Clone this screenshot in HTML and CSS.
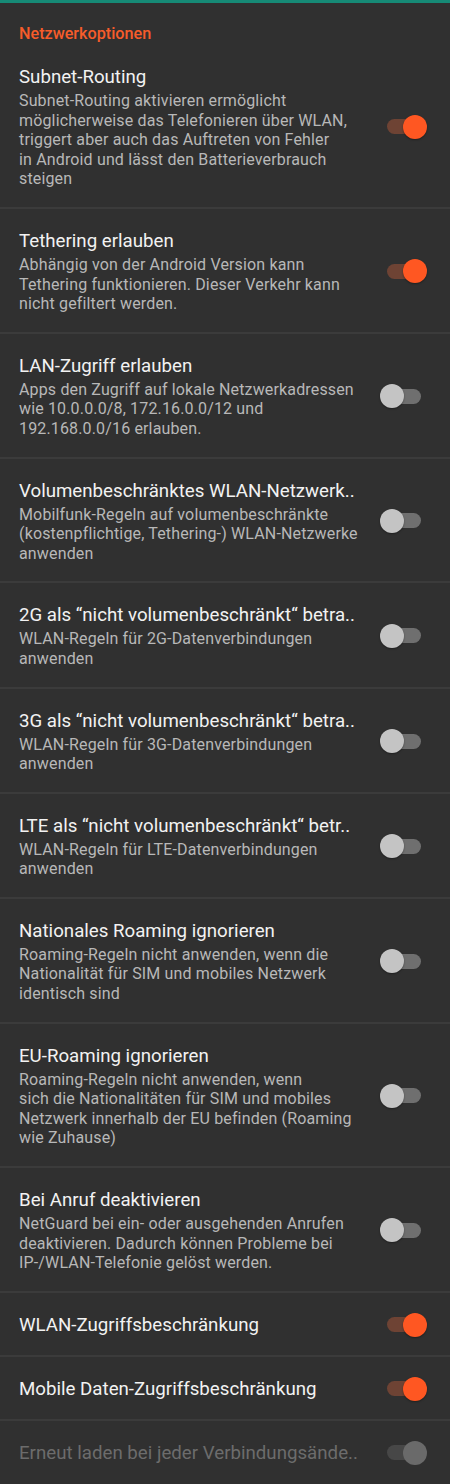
FILE: index.html
```html
<!DOCTYPE html>
<html lang="de">
<head>
<meta charset="utf-8">
<title>Netzwerkoptionen</title>
<link rel="stylesheet" href="styles.css">
</head>
<body>
<div class="topbar"></div>
<div class="category">Netzwerkoptionen</div>

<div class="pref">
  <div class="text">
    <div class="title">Subnet-Routing</div>
    <div class="summary">Subnet-Routing aktivieren ermöglicht<br>möglicherweise das Telefonieren über WLAN,<br>triggert aber auch das Auftreten von Fehler<br>in Android und lässt den Batterieverbrauch<br>steigen</div>
  </div>
  <div class="switch on"><span class="track"></span><span class="thumb"></span></div>
</div>

<div class="pref">
  <div class="text">
    <div class="title">Tethering erlauben</div>
    <div class="summary">Abhängig von der Android Version kann<br>Tethering funktionieren. Dieser Verkehr kann<br>nicht gefiltert werden.</div>
  </div>
  <div class="switch on"><span class="track"></span><span class="thumb"></span></div>
</div>

<div class="pref">
  <div class="text">
    <div class="title">LAN-Zugriff erlauben</div>
    <div class="summary">Apps den Zugriff auf lokale Netzwerkadressen<br>wie 10.0.0.0/8, 172.16.0.0/12 und<br>192.168.0.0/16 erlauben.</div>
  </div>
  <div class="switch"><span class="track"></span><span class="thumb"></span></div>
</div>

<div class="pref">
  <div class="text">
    <div class="title">Volumenbeschränktes WLAN-Netzwerk..</div>
    <div class="summary">Mobilfunk-Regeln auf volumenbeschränkte<br>(kostenpflichtige, Tethering-) WLAN-Netzwerke<br>anwenden</div>
  </div>
  <div class="switch"><span class="track"></span><span class="thumb"></span></div>
</div>

<div class="pref">
  <div class="text">
    <div class="title">2G als “nicht volumenbeschränkt“ betra..</div>
    <div class="summary">WLAN-Regeln für 2G-Datenverbindungen<br>anwenden</div>
  </div>
  <div class="switch"><span class="track"></span><span class="thumb"></span></div>
</div>

<div class="pref">
  <div class="text">
    <div class="title">3G als “nicht volumenbeschränkt“ betra..</div>
    <div class="summary">WLAN-Regeln für 3G-Datenverbindungen<br>anwenden</div>
  </div>
  <div class="switch"><span class="track"></span><span class="thumb"></span></div>
</div>

<div class="pref">
  <div class="text">
    <div class="title">LTE als “nicht volumenbeschränkt“ betr..</div>
    <div class="summary">WLAN-Regeln für LTE-Datenverbindungen<br>anwenden</div>
  </div>
  <div class="switch"><span class="track"></span><span class="thumb"></span></div>
</div>

<div class="pref">
  <div class="text">
    <div class="title">Nationales Roaming ignorieren</div>
    <div class="summary">Roaming-Regeln nicht anwenden, wenn die<br>Nationalität für SIM und mobiles Netzwerk<br>identisch sind</div>
  </div>
  <div class="switch"><span class="track"></span><span class="thumb"></span></div>
</div>

<div class="pref">
  <div class="text">
    <div class="title">EU-Roaming ignorieren</div>
    <div class="summary">Roaming-Regeln nicht anwenden, wenn<br>sich die Nationalitäten für SIM und mobiles<br>Netzwerk innerhalb der EU befinden (Roaming<br>wie Zuhause)</div>
  </div>
  <div class="switch"><span class="track"></span><span class="thumb"></span></div>
</div>

<div class="pref">
  <div class="text">
    <div class="title">Bei Anruf deaktivieren</div>
    <div class="summary">NetGuard bei ein- oder ausgehenden Anrufen<br>deaktivieren. Dadurch können Probleme bei<br>IP-/WLAN-Telefonie gelöst werden.</div>
  </div>
  <div class="switch"><span class="track"></span><span class="thumb"></span></div>
</div>

<div class="pref">
  <div class="text">
    <div class="title">WLAN-Zugriffsbeschränkung</div>
  </div>
  <div class="switch on"><span class="track"></span><span class="thumb"></span></div>
</div>

<div class="pref">
  <div class="text">
    <div class="title">Mobile Daten-Zugriffsbeschränkung</div>
  </div>
  <div class="switch on"><span class="track"></span><span class="thumb"></span></div>
</div>

<div class="pref disabled">
  <div class="text">
    <div class="title">Erneut laden bei jeder Verbindungsände..</div>
  </div>
  <div class="switch on"><span class="track"></span><span class="thumb"></span></div>
</div>
</body>
</html>
```

FILE: styles.css
```css
html, body {
  margin: 0;
  padding: 0;
  background: #303030;
}
body {
  font-family: Roboto, "Noto Sans", "Liberation Sans", sans-serif;
  width: 450px;
  overflow: hidden;
}
.topbar {
  height: 3px;
  background: #168a76;
}
.category {
  padding: 21px 19px 1px;
  font-size: 16.2px;
  line-height: 20px;
  font-weight: 500;
  color: #f75c2a;
}
.pref {
  display: flex;
  align-items: center;
  padding: 20px 23px 18px 19px;
  border-bottom: 2px solid #3b3b3b;
}
.pref:last-child {
  border-bottom: none;
}
.text {
  flex: 1;
  min-width: 0;
}
.title {
  font-size: 18.7px;
  line-height: 24px;
  color: #f2f2f2;
  white-space: nowrap;
}
.summary {
  margin-top: 2px;
  font-size: 16px;
  letter-spacing: 0.15px;
  line-height: 19.6px;
  color: #b8b8b8;
  white-space: nowrap;
}
.switch {
  position: relative;
  flex: none;
  width: 47px;
  height: 24px;
}
.track {
  position: absolute;
  left: 7px;
  top: 4.5px;
  width: 34px;
  height: 15px;
  border-radius: 8px;
  background: #6f6f6f;
}
.thumb {
  position: absolute;
  left: 0;
  top: 0;
  width: 24px;
  height: 24px;
  border-radius: 50%;
  background: #c4c4c4;
  box-shadow: 0 1px 2px rgba(0, 0, 0, 0.35);
}
.switch.on .track {
  background: #6e4334;
}
.switch.on .thumb {
  left: 23px;
  background: #ff5722;
}
.disabled .title {
  color: #6c6c6c;
}
.disabled .switch.on .track {
  background: #474747;
}
.disabled .switch.on .thumb {
  background: #6a6a6a;
  box-shadow: none;
}
```
